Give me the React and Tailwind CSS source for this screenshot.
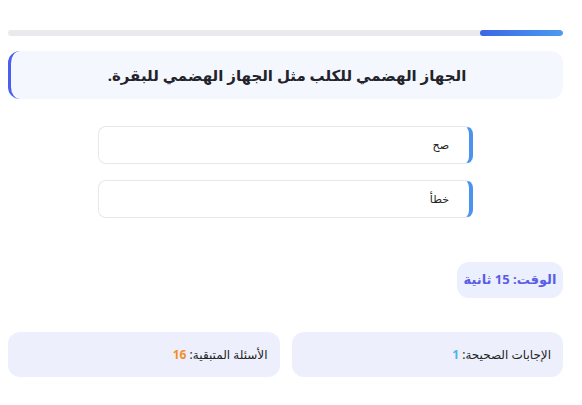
export default function App() {
  const options = ["صح", "خطأ"];

  return (
    <div
      dir="rtl"
      className="bg-white min-h-[405px] pl-2 pr-[19px] pt-[30px] text-[#1f2937]"
      style={{ fontFamily: '"Noto Sans", "DejaVu Sans", sans-serif' }}
    >
      {/* Progress */}
      <div className="h-[6px] w-full rounded-full bg-[#e8eaee] overflow-hidden">
        <div className="h-full w-[15%] rounded-full bg-gradient-to-l from-[#4b9bef] to-[#3c66e3]" />
      </div>

      {/* Question */}
      <div className="mt-[15px] h-[48px] flex items-center justify-center rounded-xl bg-[#f4f7fe] border-l-[3px] border-[#4a5ef2]">
        <h2 className="text-[15px] font-bold text-[#23232b]">
          الجهاز الهضمي للكلب مثل الجهاز الهضمي للبقرة.
        </h2>
      </div>

      {/* Options */}
      <div className="mt-[27px] flex flex-col items-center gap-4">
        {options.map((o) => (
          <div
            key={o}
            className="w-[375px] h-[38px] flex items-center px-5 rounded-lg bg-white border border-[#e6e8ec] border-r-4 border-r-[#4a94ef] text-[11px] text-[#222]"
          >
            {o}
          </div>
        ))}
      </div>

      {/* Timer */}
      <div className="mt-[44px] flex">
        <div className="h-[36px] w-[106px] flex items-center justify-center rounded-xl bg-[#eceffd] text-[13px] font-bold text-[#5a5ee6]">
          الوقت: 15 ثانية
        </div>
      </div>

      {/* Stats */}
      <div className="mt-[34px] grid grid-cols-2 gap-3">
        <div className="h-[45px] flex items-center px-3 rounded-xl bg-[#edf0fc] text-[12px] text-[#222]">
          <span>
            الإجابات الصحيحة: <span className="font-bold text-[#4cb5ea]">1</span>
          </span>
        </div>
        <div className="h-[45px] flex items-center px-3 rounded-xl bg-[#edf0fc] text-[12px] text-[#222]">
          <span>
            الأسئلة المتبقية: <span className="font-bold text-[#f28f2a]">16</span>
          </span>
        </div>
      </div>
    </div>
  );
}
